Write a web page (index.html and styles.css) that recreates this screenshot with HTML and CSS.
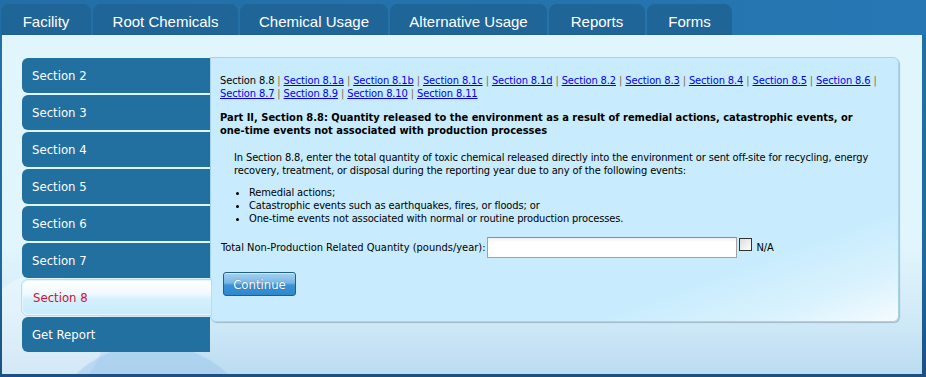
FILE: index.html
```html
<!DOCTYPE html>
<html>
<head>
<meta charset="utf-8">
<link rel="stylesheet" href="styles.css">
</head>
<body>
<div class="page">
  <div class="topbar">
    <div class="tab t1">Facility</div>
    <div class="tab t2">Root Chemicals</div>
    <div class="tab t3">Chemical Usage</div>
    <div class="tab t4">Alternative Usage</div>
    <div class="tab t5">Reports</div>
    <div class="tab t6">Forms</div>
  </div>
  <div class="main">
    <div class="nav">
      <div class="navitem">Section 2</div>
      <div class="navitem">Section 3</div>
      <div class="navitem">Section 4</div>
      <div class="navitem">Section 5</div>
      <div class="navitem">Section 6</div>
      <div class="navitem">Section 7</div>
      <div class="navitem active">Section 8</div>
      <div class="navitem">Get Report</div>
    </div>
    <div class="panel">
      <div class="links">Section 8.8 <span class="sep">|</span> <a href="#">Section 8.1a</a> <span class="sep">|</span> <a href="#">Section 8.1b</a> <span class="sep">|</span> <a href="#">Section 8.1c</a> <span class="sep">|</span> <a href="#">Section 8.1d</a> <span class="sep">|</span> <a href="#">Section 8.2</a> <span class="sep">|</span> <a href="#">Section 8.3</a> <span class="sep">|</span> <a href="#">Section 8.4</a> <span class="sep">|</span> <a href="#">Section 8.5</a> <span class="sep">|</span> <a href="#">Section 8.6</a> <span class="sep">|</span> <a href="#">Section 8.7</a> <span class="sep">|</span> <a href="#">Section 8.9</a> <span class="sep">|</span> <a href="#">Section 8.10</a> <span class="sep">|</span> <a href="#">Section 8.11</a></div>
      <div class="heading">Part II, Section 8.8: Quantity released to the environment as a result of remedial actions, catastrophic events, or one-time events not associated with production processes</div>
      <p class="intro">In Section 8.8, enter the total quantity of toxic chemical released directly into the environment or sent off-site for recycling, energy recovery, treatment, or disposal during the reporting year due to any of the following events:</p>
      <ul class="events">
        <li>Remedial actions;</li>
        <li>Catastrophic events such as earthquakes, fires, or floods; or</li>
        <li>One-time events not associated with normal or routine production processes.</li>
      </ul>
      <div class="formrow">
        <label class="qlabel">Total Non-Production Related Quantity (pounds/year):</label>
        <input class="qinput" type="text">
        <span class="check"></span>
        <span class="na">N/A</span>
      </div>
      <div class="btnrow"><button class="continue">Continue</button></div>
    </div>
  </div>
</div>
</body>
</html>
```
FILE: styles.css
```css
html, body {
  margin: 0;
  padding: 0;
}
body {
  width: 926px;
  height: 377px;
  overflow: hidden;
  background: linear-gradient(to bottom, #2371aa 0%, #2168a0 70%, #1c5080 100%);
}
.page {
  width: 926px;
  height: 377px;
  display: flex;
  flex-direction: column;
}
.topbar {
  height: 35px;
  display: flex;
  align-items: flex-end;
  gap: 2px;
  padding-left: 1px;
  background: linear-gradient(to right, #236ea6, #2677b3);
  flex: none;
}
.tab {
  height: 31px;
  border-radius: 8px 8px 0 0;
  background: #1f6597;
  color: #fff;
  font-family: "Liberation Sans", Arial, sans-serif;
  font-size: 15px;
  display: flex;
  align-items: center;
  justify-content: center;
  box-sizing: border-box;
  padding-top: 4px;
  border-bottom: 1px solid #1d5f8e;
}
.t1 { width: 90px; }
.t2 { width: 145px; }
.t3 { width: 148px; }
.t4 { width: 157px; }
.t5 { width: 96px; }
.t6 { width: 85px; }

.main {
  margin: 0 4px 0 2px;
  height: 339px;
  box-sizing: border-box;
  padding: 22px 0 0 20px;
  display: flex;
  align-items: flex-start;
  background:
    radial-gradient(circle at 150px 420px, rgba(150,195,235,0.45) 0, rgba(150,195,235,0.45) 110px, rgba(150,195,235,0) 112px),
    radial-gradient(circle at 40px 300px, rgba(255,255,255,0.35) 0, rgba(255,255,255,0.35) 60px, rgba(255,255,255,0) 62px),
    linear-gradient(to bottom, #e1f5fd 0%, #e1f5fd 62%, #d2ebf8 82%, #bcdcf1 100%);
}

.nav {
  width: 188px;
  flex: none;
  display: flex;
  flex-direction: column;
  gap: 2px;
  padding-top: 1px;
  position: relative;
  z-index: 2;
}
.navitem {
  height: 35px;
  box-sizing: border-box;
  background: #22709f;
  color: #fff;
  font-family: "DejaVu Sans Condensed", "DejaVu Sans", sans-serif;
  font-stretch: semi-condensed;
  font-size: 13px;
  padding-left: 10px;
  display: flex;
  align-items: center;
  border-radius: 6px 0 0 6px;
}
.navitem.active {
  background: linear-gradient(to bottom, #ffffff 0%, #eef9ff 40%, #d4f0fd 55%, #c9ebfb 100%);
  color: #d0102e;
  border: 1px solid #e6f6fe;
  border-right: none;
  margin-right: -1px;
  box-shadow: 0 0 0 1px #b5def2;
}

.panel {
  width: 689px;
  flex: none;
  box-sizing: border-box;
  margin-top: 0;
  border: 1px solid #a6d3ea;
  border-radius: 0 6px 6px 6px;
  background: linear-gradient(160deg, #c8ecfd 0%, #c8ecfd 78%, #d9f2fd 90%, #f4fbff 100%);
  box-shadow: 1px 1px 1px rgba(120,140,160,0.5);
  padding: 16px 17px 25px 9px;
  font-family: "DejaVu Sans Condensed", "DejaVu Sans", sans-serif;
  font-stretch: semi-condensed;
  font-size: 11px;
  line-height: 13px;
  letter-spacing: -0.12px;
  color: #000;
}
.links a {
  color: #0000ee;
  text-decoration: underline;
}
.sep {
  color: #8c6b3c;
}
.heading {
  font-weight: bold;
  margin-top: 11px;
  letter-spacing: 0;
  padding-right: 22px;
}
.intro {
  margin: 14px 0 0 14px;
}
.events {
  margin: 9px 0 0 0;
  padding-left: 29px;
}
.formrow {
  margin-top: 12px;
  display: flex;
  align-items: center;
  height: 21px;
}
.qlabel {
  margin-left: 1px;
  margin-right: 2px;
  letter-spacing: 0;
}
.qinput {
  width: 250px;
  height: 21px;
  box-sizing: border-box;
  border: 1px solid #a3a3a3;
  border-top-color: #8e8e8e;
  background: linear-gradient(to bottom, #f0f0f0 0, #ffffff 4px);
  margin: 0;
  padding: 0;
}
.check {
  width: 13px;
  height: 13px;
  box-sizing: border-box;
  border: 1px solid #333;
  background: linear-gradient(135deg, #dcdcdc, #ffffff);
  margin-left: 2px;
  align-self: flex-start;
  margin-top: 1px;
}
.na {
  margin-left: 4px;
}
.btnrow {
  margin-top: 14px;
  padding-left: 3px;
  display: flex;
}
.continue {
  width: 73px;
  height: 24px;
  box-sizing: border-box;
  border: 1px solid #1f5f8c;
  border-radius: 3px;
  background: linear-gradient(to bottom, #a6d2f0 0%, #77b6e4 45%, #3b93d6 55%, #2f86cc 100%);
  color: #fff;
  font-family: "DejaVu Sans Condensed", "DejaVu Sans", sans-serif;
  font-stretch: semi-condensed;
  font-size: 13px;
  padding: 0;
  text-shadow: 0 0 1px rgba(0,40,90,0.5);
  box-shadow: inset 0 1px 0 rgba(255,255,255,0.5);
}
```
